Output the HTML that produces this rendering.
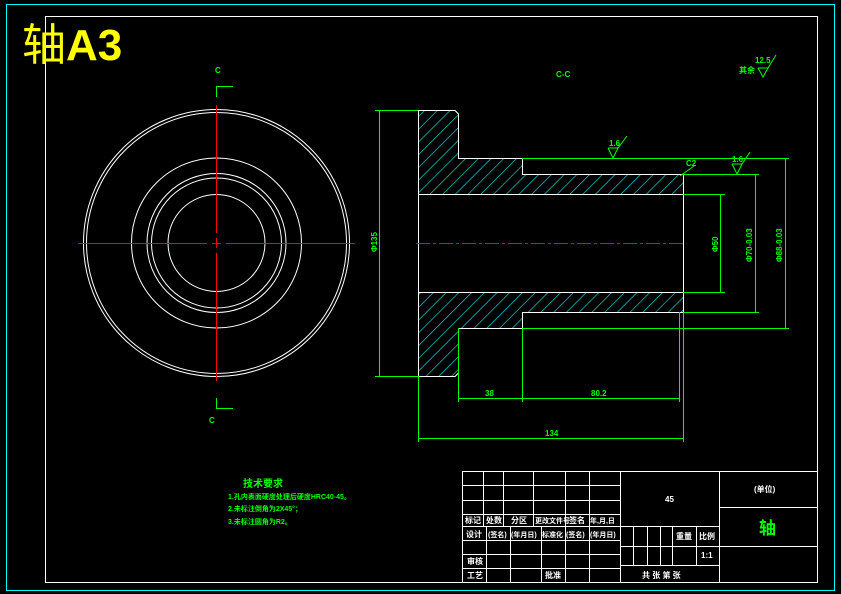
<!DOCTYPE html>
<html><head><meta charset="utf-8"><style>
html,body{margin:0;padding:0;background:#000;width:841px;height:594px;overflow:hidden}
svg{display:block}
text{font-family:"Liberation Sans","Noto Sans CJK SC",sans-serif}
</style></head><body>
<svg width="841" height="594" viewBox="0 0 841 594" xmlns="http://www.w3.org/2000/svg">
<defs>
<pattern id="h" patternUnits="userSpaceOnUse" width="9" height="9" patternTransform="rotate(45)">
<line x1="0" y1="0" x2="0" y2="9" stroke="#00e5e5" stroke-width="1.3"/>
</pattern>
</defs>
<rect width="841" height="594" fill="#000"/>
<g shape-rendering="crispEdges">
<rect x="6.5" y="4.5" width="828" height="586" fill="none" stroke="#00ffff" stroke-width="1"/>
<rect x="45.5" y="16.5" width="772" height="566" fill="none" stroke="#fff" stroke-width="1"/>
</g>
<text x="22" y="60" font-size="44" fill="#ffff00" font-family="'Liberation Sans','Noto Sans CJK SC',sans-serif"><tspan>轴</tspan><tspan font-weight="bold">A3</tspan></text>

<!-- left view circles -->
<g fill="none" stroke="#fff" stroke-width="1">
<ellipse cx="216.5" cy="243" rx="133" ry="133.5"/>
<ellipse cx="216.5" cy="243" rx="130" ry="130.5"/>
<circle cx="216.5" cy="243" r="85"/>
<circle cx="216.5" cy="243" r="69.5"/>
<circle cx="216.5" cy="243" r="65"/>
<circle cx="216.5" cy="243" r="48.5"/>
</g>
<g stroke="#ff0000" stroke-width="1" shape-rendering="crispEdges">
<line x1="78" y1="243.5" x2="207" y2="243.5"/><line x1="212" y1="243.5" x2="221" y2="243.5"/><line x1="226" y1="243.5" x2="355" y2="243.5"/>
<line x1="216.5" y1="105" x2="216.5" y2="233"/><line x1="216.5" y1="238" x2="216.5" y2="248"/><line x1="216.5" y1="253" x2="216.5" y2="381"/>
</g>
<g stroke="#00ff00" fill="none" stroke-width="1" shape-rendering="crispEdges">
<polyline points="216.5,97 216.5,86.5 233,86.5"/>
<polyline points="216.5,398 216.5,408.5 233,408.5"/>
</g>
<g fill="#00ff00" font-size="8" font-weight="bold">
<text x="215" y="73">C</text><text x="209" y="423">C</text><text x="556" y="77">C-C</text>
</g>

<!-- right section view -->
<path d="M418,110 L455,110 L458,113 L458,158 L522,158 L522,174 L683,174 L683,194 L418,194 Z" fill="url(#h)"/>
<path d="M418,292 L683,292 L683,312 L522,312 L522,328 L458,328 L458,373 L455,376 L418,376 Z" fill="url(#h)"/>
<g fill="none" stroke="#fff" stroke-width="1" shape-rendering="crispEdges">
<path d="M418.5,110.5 L455,110.5 L458.5,114 L458.5,158.5 L522.5,158.5 L522.5,174.5 L683.5,174.5 L683.5,312.5 L522.5,312.5 L522.5,328.5 L458.5,328.5 L458.5,373 L455,376.5 L418.5,376.5 Z"/>
<line x1="418" y1="194.5" x2="683" y2="194.5"/>
<line x1="418" y1="292.5" x2="683" y2="292.5"/>
</g>
<line x1="416" y1="243.5" x2="686" y2="243.5" stroke="#ff0000" stroke-dasharray="14,3,3,3" shape-rendering="crispEdges"/>
<g stroke="#00ff00" stroke-width="1" fill="none" shape-rendering="crispEdges">
<line x1="375" y1="110.5" x2="418" y2="110.5"/><line x1="375" y1="376.5" x2="418" y2="376.5"/>
<line x1="379.5" y1="110" x2="379.5" y2="376"/>
<line x1="522" y1="158.5" x2="789" y2="158.5"/><line x1="683" y1="174.5" x2="759" y2="174.5"/>
<line x1="683" y1="194.5" x2="725" y2="194.5"/><line x1="683" y1="292.5" x2="725" y2="292.5"/>
<line x1="683" y1="312.5" x2="759" y2="312.5"/><line x1="522" y1="328.5" x2="789" y2="328.5"/>
<line x1="720.5" y1="194" x2="720.5" y2="292"/>
<line x1="755.5" y1="174" x2="755.5" y2="312"/>
<line x1="785.5" y1="158" x2="785.5" y2="328"/>
<line x1="458.5" y1="328" x2="458.5" y2="402"/><line x1="522.5" y1="328" x2="522.5" y2="402"/>
<line x1="679.5" y1="312" x2="679.5" y2="402"/>
<line x1="458" y1="398.5" x2="679" y2="398.5"/>
<line x1="418.5" y1="376" x2="418.5" y2="442"/><line x1="683.5" y1="312" x2="683.5" y2="442"/>
<line x1="418" y1="438.5" x2="683" y2="438.5"/>
</g>
<g stroke="#00ff00" stroke-width="1" fill="none">
<line x1="680" y1="176" x2="694" y2="166"/>
<polyline points="608,148 613,158 618,148 608,148"/><line x1="618" y1="148" x2="627" y2="136"/>
<polyline points="732,164 737,174 742,164 732,164"/><line x1="742" y1="164" x2="750" y2="152"/>
<polyline points="758,68 763,77 768,68 758,68"/><line x1="768" y1="68" x2="776" y2="55"/>
</g>
<g fill="#00ff00" font-size="8" font-weight="bold">
<text x="485" y="396">38</text><text x="591" y="396">80.2</text><text x="545" y="436">134</text>
<text x="609" y="146">1.6</text><text x="732" y="162">1.6</text><text x="686" y="166">C2</text>
<text x="755" y="63">12.5</text><text x="739" y="73">其余</text>
<text transform="translate(377,252) rotate(-90)">Φ135</text>
<text transform="translate(718,252) rotate(-90)">Φ50</text>
<text transform="translate(752,262) rotate(-90)">Φ70-0.03</text>
<text transform="translate(782,262) rotate(-90)">Φ88-0.03</text>
</g>

<!-- technical requirements -->
<g fill="#00ff00" font-weight="bold">
<text x="243" y="487" font-size="10">技术要求</text>
<text x="228" y="499" font-size="7">1.孔内表面硬度处理后硬度HRC40-45。</text>
<text x="228" y="511" font-size="7">2.未标注倒角为2X45°；</text>
<text x="228" y="524" font-size="7">3.未标注圆角为R2。</text>
</g>

<!-- title block -->
<g stroke="#fff" stroke-width="1" fill="none" shape-rendering="crispEdges">
<rect x="462.5" y="471.5" width="355" height="111"/>
<line x1="462" y1="485.5" x2="620" y2="485.5"/><line x1="462" y1="500.5" x2="620" y2="500.5"/>
<line x1="462" y1="514.5" x2="620" y2="514.5"/><line x1="462" y1="526.5" x2="719" y2="526.5"/>
<line x1="462" y1="540.5" x2="620" y2="540.5"/><line x1="462" y1="554.5" x2="620" y2="554.5"/>
<line x1="462" y1="568.5" x2="620" y2="568.5"/>
<line x1="483.5" y1="471" x2="483.5" y2="526"/><line x1="503.5" y1="471" x2="503.5" y2="526"/>
<line x1="533.5" y1="471" x2="533.5" y2="526"/><line x1="565.5" y1="471" x2="565.5" y2="582"/>
<line x1="589.5" y1="471" x2="589.5" y2="582"/>
<line x1="486.5" y1="526" x2="486.5" y2="582"/><line x1="510.5" y1="526" x2="510.5" y2="582"/>
<line x1="541.5" y1="526" x2="541.5" y2="582"/>
<line x1="620.5" y1="471" x2="620.5" y2="582"/><line x1="719.5" y1="471" x2="719.5" y2="582"/>
<line x1="620" y1="546.5" x2="719" y2="546.5"/><line x1="620" y1="565.5" x2="719" y2="565.5"/>
<line x1="633.5" y1="526" x2="633.5" y2="565"/><line x1="647.5" y1="526" x2="647.5" y2="565"/>
<line x1="660.5" y1="526" x2="660.5" y2="565"/><line x1="672.5" y1="526" x2="672.5" y2="565"/>
<line x1="696.5" y1="526" x2="696.5" y2="565"/>
<line x1="719" y1="507.5" x2="817" y2="507.5"/><line x1="719" y1="546.5" x2="817" y2="546.5"/>
</g>
<g fill="#fff" font-size="8" font-weight="bold">
<text x="465" y="523">标记</text><text x="486" y="523">处数</text><text x="511" y="523">分区</text>
<text x="535" y="523" font-size="7">更改文件号</text><text x="569" y="523">签名</text><text x="590" y="523" font-size="7">年,月,日</text>
<text x="466" y="537">设计</text><text x="488" y="537" font-size="7">(签名)</text><text x="511" y="537" font-size="7">(年月日)</text>
<text x="542" y="537" font-size="7">标准化</text><text x="566" y="537" font-size="7">(签名)</text><text x="590" y="537" font-size="7">(年月日)</text>
<text x="467" y="564">审核</text><text x="467" y="578">工艺</text><text x="545" y="578">批准</text>
<text x="665" y="502">45</text><text x="754" y="492">(单位)</text>
<text x="676" y="539">重量</text><text x="699" y="539">比例</text><text x="701" y="558">1:1</text>
<text x="642" y="578">共  张  第  张</text>
</g>
<text x="759" y="534" font-size="17" fill="#00ff00" font-weight="bold">轴</text>
</svg>
</body></html>
